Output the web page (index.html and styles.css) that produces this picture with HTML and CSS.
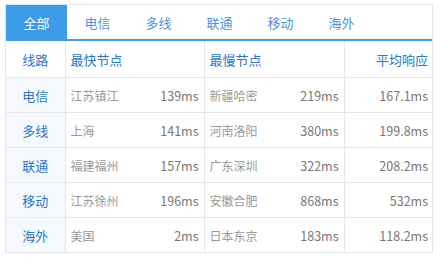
FILE: index.html
```html
<!DOCTYPE html>
<html lang="zh">
<head>
<meta charset="utf-8">
<link rel="stylesheet" href="styles.css">
</head>
<body>
<div class="panel">
  <div class="tabs">
    <div class="tab active">全部</div>
    <div class="tab">电信</div>
    <div class="tab">多线</div>
    <div class="tab">联通</div>
    <div class="tab">移动</div>
    <div class="tab">海外</div>
  </div>
  <table class="grid">
    <colgroup>
      <col class="c1"><col class="c2"><col class="c3"><col class="c4">
    </colgroup>
    <thead>
      <tr>
        <th class="line">线路</th>
        <th class="left">最快节点</th>
        <th class="left">最慢节点</th>
        <th class="right">平均响应</th>
      </tr>
    </thead>
    <tbody>
      <tr>
        <td class="line">电信</td>
        <td><div class="pair"><span class="city">江苏镇江</span><span class="ms">139ms</span></div></td>
        <td><div class="pair"><span class="city">新疆哈密</span><span class="ms">219ms</span></div></td>
        <td class="avg">167.1ms</td>
      </tr>
      <tr>
        <td class="line">多线</td>
        <td><div class="pair"><span class="city">上海</span><span class="ms">141ms</span></div></td>
        <td><div class="pair"><span class="city">河南洛阳</span><span class="ms">380ms</span></div></td>
        <td class="avg">199.8ms</td>
      </tr>
      <tr>
        <td class="line">联通</td>
        <td><div class="pair"><span class="city">福建福州</span><span class="ms">157ms</span></div></td>
        <td><div class="pair"><span class="city">广东深圳</span><span class="ms">322ms</span></div></td>
        <td class="avg">208.2ms</td>
      </tr>
      <tr>
        <td class="line">移动</td>
        <td><div class="pair"><span class="city">江苏徐州</span><span class="ms">196ms</span></div></td>
        <td><div class="pair"><span class="city">安徽合肥</span><span class="ms">868ms</span></div></td>
        <td class="avg">532ms</td>
      </tr>
      <tr>
        <td class="line">海外</td>
        <td><div class="pair"><span class="city">美国</span><span class="ms">2ms</span></div></td>
        <td><div class="pair"><span class="city">日本东京</span><span class="ms">183ms</span></div></td>
        <td class="avg">118.2ms</td>
      </tr>
    </tbody>
  </table>
</div>
</body>
</html>
```
FILE: styles.css
```css
html, body {
  margin: 0;
  padding: 0;
  background: #fff;
}
body {
  padding: 4px 0 0 5px;
  font-family: "Noto Sans CJK SC", "Noto Sans", sans-serif;
}
.panel {
  width: 428px;
  box-sizing: border-box;
  border: 1px solid #e6e6e6;
  border-bottom: none;
}
.tabs {
  display: flex;
  height: 34px;
  border-bottom: 2px solid #3c9be6;
}
.tab {
  width: 61px;
  display: flex;
  align-items: center;
  justify-content: center;
  font-size: 13px;
  color: #4a95e0;
}
.tab.active {
  background: #3c9be6;
  color: #fff;
}
.grid {
  width: 426px;
  border-collapse: collapse;
  table-layout: fixed;
}
.c1 { width: 59px; }
.c2 { width: 139px; }
.c3 { width: 140px; }
.c4 { width: 88px; }
.grid th, .grid td {
  border-bottom: 1px solid #e6e6e6;
  border-right: 1px solid #e6e6e6;
  padding: 0 5px 0 5px;
  height: 34px;
  font-weight: normal;
  white-space: nowrap;
}
.grid th:last-child, .grid td:last-child {
  border-right: none;
  padding-right: 4px;
}
.grid thead th {
  height: 36px;
  font-size: 13px;
  color: #2a78c6;
}
.grid .line {
  text-align: center;
  font-size: 13px;
  color: #2a78c6;
}
.grid td.line {
  background: #f5f9fd;
}
.left { text-align: left; }
.right { text-align: right; }
.pair {
  display: flex;
  justify-content: space-between;
  align-items: center;
}
.city {
  font-size: 12px;
  color: #999;
}
.ms {
  font-size: 12.5px;
  color: #777;
}
.avg {
  text-align: right;
  font-size: 12.5px;
  color: #777;
}
```
